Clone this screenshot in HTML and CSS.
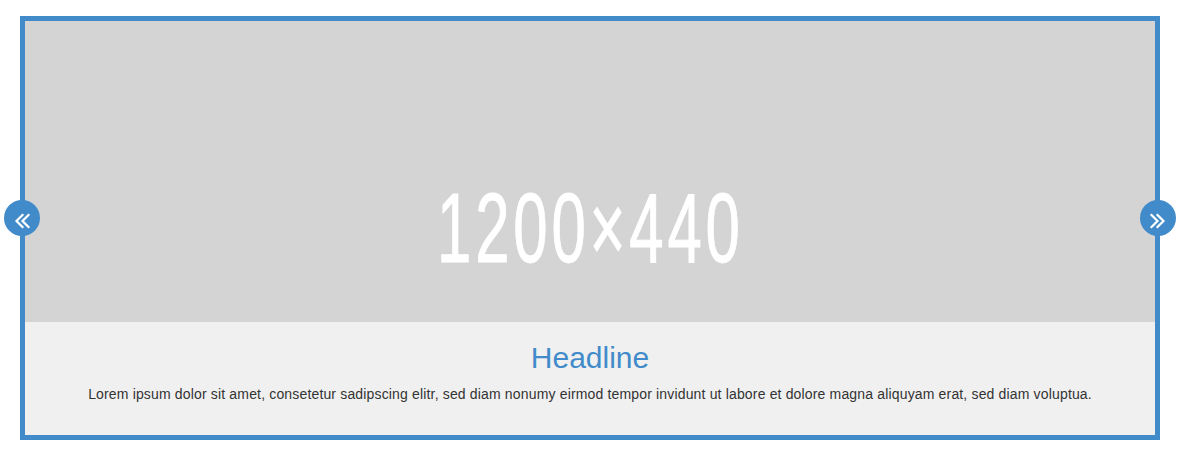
FILE: index.html
```html
<!DOCTYPE html>
<html>
<head>
<meta charset="utf-8">
<link rel="stylesheet" href="styles.css">
</head>
<body>
<div class="slider">
  <div class="slide">
    <div class="placeholder"><span class="dims">1200×440</span></div>
    <div class="caption">
      <h2 class="headline">Headline</h2>
      <p class="text">Lorem ipsum dolor sit amet, consetetur sadipscing elitr, sed diam nonumy eirmod tempor invidunt ut labore et dolore magna aliquyam erat, sed diam voluptua.</p>
    </div>
  </div>
  <button class="nav nav-prev" aria-label="previous">
    <svg width="36" height="36" viewBox="0 0 36 36"><path d="M18.5 15 L12.5 21 L18.5 27 M24.5 15 L18.5 21 L24.5 27" fill="none" stroke="#fff" stroke-width="2.2" stroke-linecap="square"/></svg>
  </button>
  <button class="nav nav-next" aria-label="next">
    <svg width="36" height="36" viewBox="0 0 36 36"><path d="M11.5 15 L17.5 21 L11.5 27 M17.5 15 L23.5 21 L17.5 27" fill="none" stroke="#fff" stroke-width="2.2" stroke-linecap="square"/></svg>
  </button>
</div>
</body>
</html>
```

FILE: styles.css
```css
html, body {
  margin: 0;
  padding: 0;
  background: #ffffff;
}
body {
  font-family: "Liberation Sans", Arial, sans-serif;
}
.slider {
  position: relative;
  box-sizing: border-box;
  width: 1140px;
  margin: 16px 0 0 20px;
  border: 5px solid #428bca;
}
.slide {
  position: relative;
  height: 414px;
  overflow: hidden;
}
.placeholder {
  height: 414px;
  background: #d4d4d4;
  display: flex;
  align-items: center;
  justify-content: center;
}
.dims {
  display: inline-block;
  color: #ffffff;
  font-size: 98px;
  line-height: 1;
  letter-spacing: 6px;
  transform: scaleX(0.63);
  -webkit-text-stroke: 1px #ffffff;
}
.caption {
  position: absolute;
  left: 0;
  right: 0;
  bottom: 0;
  height: 113px;
  box-sizing: border-box;
  padding-top: 19px;
  background: #f0f0f0;
  text-align: center;
}
.headline {
  margin: 0;
  font-size: 30px;
  line-height: 33px;
  font-weight: normal;
  color: #428bca;
}
.text {
  margin: 10px 0 0;
  font-size: 14px;
  line-height: 20px;
  letter-spacing: 0.16px;
  color: #333333;
}
.nav {
  position: absolute;
  top: 179px;
  width: 36px;
  height: 36px;
  padding: 0;
  border: 0;
  border-radius: 50%;
  background: #428bca;
  display: flex;
  align-items: center;
  justify-content: center;
  cursor: pointer;
}
.nav svg {
  display: block;
}
.nav-prev {
  left: -21px;
}
.nav-next {
  right: -21px;
}
```
